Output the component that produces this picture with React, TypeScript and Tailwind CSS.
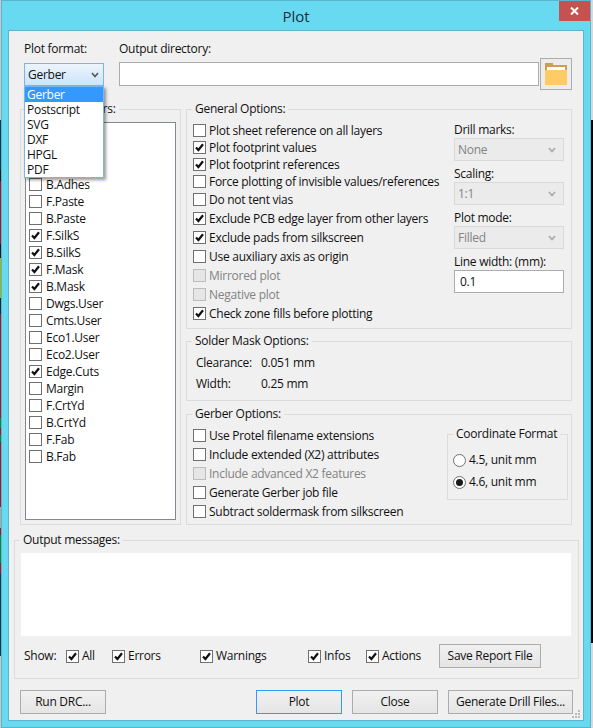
import type { ReactNode } from 'react'

function Check({ on, disabled }: { on?: boolean; disabled?: boolean }) {
  return (
    <span
      className={
        'flex h-[13px] w-[13px] shrink-0 items-center justify-center border ' +
        (disabled ? 'border-[#bcbcbc] bg-[#e6e6e6]' : 'border-[#707070] bg-white')
      }
    >
      {on && (
        <svg width="9" height="9" viewBox="0 0 9 9">
          <path d="M1 4.5 L3.4 7 L8 1.2" fill="none" stroke="#111" strokeWidth="2.2" />
        </svg>
      )}
    </span>
  )
}

function Opt({ label, on, disabled, className = '' }: { label: string; on?: boolean; disabled?: boolean; className?: string }) {
  return (
    <div className={'flex items-center gap-[3px] whitespace-nowrap ' + className}>
      <Check on={on} disabled={disabled} />
      <span className={disabled ? 'text-[#838383]' : ''}>{label}</span>
    </div>
  )
}

// Padding goes on the inner div: fieldset padding would push the legend along with it.
function Group({ title, className = '', inner = '', children }: { title: string; className?: string; inner?: string; children: ReactNode }) {
  return (
    <fieldset className={'min-w-0 border border-[#dcdcdc] ' + className}>
      <legend className="ml-[5px] whitespace-nowrap px-[3px] leading-[16px]">{title}</legend>
      <div className={inner}>{children}</div>
    </fieldset>
  )
}

function Combo({ value }: { value: string }) {
  return (
    <div className="flex h-[23px] w-[110px] items-center justify-between border border-[#d9d9d9] bg-[#ebebeb] pl-[3px] pr-[7px] text-[#838383]">
      {value}
      <svg width="8" height="6" viewBox="0 0 8 6">
        <path d="M1 1 L4 4.5 L7 1" fill="none" stroke="#a8a8a8" strokeWidth="1.6" />
      </svg>
    </div>
  )
}

function Btn({ label, className = '' }: { label: string; className?: string }) {
  return (
    <div className={'flex h-[24px] items-center justify-center border bg-gradient-to-b from-[#f0f0f0] to-[#e5e5e5] ' + className}>
      {label}
    </div>
  )
}

const general: [string, boolean, boolean, string][] = [
  ['Plot sheet reference on all layers', false, false, 'h-[17px]'],
  ['Plot footprint values', true, false, 'h-[17px]'],
  ['Plot footprint references', true, false, 'h-[17px]'],
  ['Force plotting of invisible values/references', false, false, 'h-[17px]'],
  ['Do not tent vias', false, false, 'h-[19px]'],
  ['Exclude PCB edge layer from other layers', true, false, 'h-[19px]'],
  ['Exclude pads from silkscreen', true, false, 'h-[19px]'],
  ['Use auxiliary axis as origin', false, false, 'h-[19px]'],
  ['Mirrored plot', false, true, 'h-[19px]'],
  ['Negative plot', false, true, 'h-[19px]'],
  ['Check zone fills before plotting', true, false, 'h-[19px]'],
]

const layers: [string, boolean][] = [
  ['B.Adhes', false],
  ['F.Paste', false],
  ['B.Paste', false],
  ['F.SilkS', true],
  ['B.SilkS', true],
  ['F.Mask', true],
  ['B.Mask', true],
  ['Dwgs.User', false],
  ['Cmts.User', false],
  ['Eco1.User', false],
  ['Eco2.User', false],
  ['Edge.Cuts', true],
  ['Margin', false],
  ['F.CrtYd', false],
  ['B.CrtYd', false],
  ['F.Fab', false],
  ['B.Fab', false],
]

export default function App() {
  return (
    <div className="flex h-[728px] w-[593px] overflow-hidden bg-[#c8c8c8] font-['Open_Sans',sans-serif] text-[12px] leading-[16px] tracking-[-0.27px] text-[#111]">
      {/* What shows of the desktop behind the dialog, left edge. */}
      <div className="w-[1px] shrink-0">
        <div className="h-[120px] bg-[#c8c8c8]" />
        <div className="h-[50px] bg-[#0c3c48]" />
        <div className="h-[11px] bg-[#1a1a1a]" />
        <div className="h-[63px] bg-[#a01628]" />
        <div className="h-[14px] bg-[#101c24]" />
        <div className="h-[40px] bg-[#a8b800]" />
        <div className="h-[16px] bg-[#0c2c38]" />
        <div className="h-[104px] bg-[#a01628]" />
        <div className="h-[10px] bg-[#0a8c3c]" />
        <div className="h-[7px] bg-[#a01628]" />
        <div className="h-[7px] bg-[#0a8c3c]" />
        <div className="h-[65px] bg-[#a01628]" />
        <div className="h-[21px] bg-[#a8a8a8]" />
        <div className="h-[7px] bg-[#a01628]" />
        <div className="h-[28px] bg-[#0a8c3c]" />
        <div className="h-[11px] bg-[#a01628]" />
        <div className="h-[82px] bg-[#0c3c48]" />
      </div>

      <div className="flex h-[728px] w-[590px] shrink-0 flex-col border border-[#5bb5cc] bg-[#67daf2] px-[6px] pb-[6px]">
        <div className="relative flex h-[29px] shrink-0 items-center justify-center text-[15px] tracking-normal text-[#1c2c40]">
          Plot
          <div className="absolute right-[-6px] top-0 flex h-[20px] w-[31px] items-center justify-center bg-[#c75050]">
            <svg width="9" height="8" viewBox="0 0 9 8">
              <path d="M1 0.5 L8 7.5 M8 0.5 L1 7.5" stroke="#fff" strokeWidth="2" />
            </svg>
          </div>
        </div>

        <div className="relative flex flex-1 flex-col border border-[#5bb5cc] bg-[#f0f0f0] pl-[5px] pr-[4px] pt-[10px]">
          <div className="ml-[10px] mr-[7px] flex gap-[15px]">
            <div className="w-[80px]">
              <div className="h-[16px]">Plot format:</div>
              <div className="relative mt-[6px] flex h-[23px] items-center justify-between border border-[#7eb4ea] bg-gradient-to-b from-[#ecf4fc] to-[#cde4fb] pl-[3px] pr-[4px]">
                Gerber
                <svg width="8" height="6" viewBox="0 0 8 6">
                  <path d="M1 1 L4 4.5 L7 1" fill="none" stroke="#555" strokeWidth="1.6" />
                </svg>
                {/* open dropdown lies over the layers group */}
                <div className="absolute left-[-1px] top-[22px] z-10 w-[80px] border border-[#7eb4ea] bg-white leading-[15px] shadow-[2px_2px_3px_rgba(0,0,0,0.4)]">
                  <div className="bg-[#3399ff] pl-[2px] text-white">Gerber</div>
                  <div className="pl-[2px]">Postscript</div>
                  <div className="pl-[2px]">SVG</div>
                  <div className="pl-[2px]">DXF</div>
                  <div className="pl-[2px]">HPGL</div>
                  <div className="pl-[2px]">PDF</div>
                </div>
              </div>
            </div>
            <div className="flex-1">
              <div className="h-[16px]">Output directory:</div>
              <div className="mt-[1px] flex items-center gap-[1px]">
                <div className="h-[24px] flex-1 border border-[#acacac] bg-white" />
                <div className="flex h-[32px] w-[32px] items-center justify-center border border-[#acacac] bg-[#ececec]">
                  <svg width="22" height="22" viewBox="0 0 22 22">
                    <path d="M0 0 H8 V2 H22 V8 H0 Z" fill="#cc9f50" />
                    <path d="M2 4 H20 V8 H2 Z" fill="#fff" />
                    <path d="M0 7 H22 V22 H0 Z" fill="#ffcb66" />
                  </svg>
                </div>
              </div>
            </div>
          </div>

          <div className="ml-[6px] mr-[7px] mt-[11px] flex gap-[5px]">
            <Group title="Included Layers:" className="h-[424px] w-[161px]" inner="px-[4px]">
              <div className="mt-[5px] h-[398px] border border-[#828790] bg-white pl-[3px] pt-[53px]">
                {layers.map(([name, on]) => (
                  <div key={name} className="flex h-[17px] items-center gap-[4px]">
                    <Check on={on} />
                    {name}
                  </div>
                ))}
              </div>
            </Group>

            <div className="w-[386px]">
              <Group title="General Options:" className="h-[228px]" inner="mt-[5px] flex pl-[6px]">
                <div className="w-[261px]">
                  {general.map(([label, on, dis, h]) => (
                    <Opt key={label} label={label} on={on} disabled={dis} className={h} />
                  ))}
                </div>
                <div className="flex flex-col">
                  <span>Drill marks:</span>
                  <Combo value="None" />
                  <span className="mt-[5px]">Scaling:</span>
                  <Combo value="1:1" />
                  <span className="mt-[5px]">Plot mode:</span>
                  <Combo value="Filled" />
                  <span className="mt-[5px]">Line width: (mm):</span>
                  <div className="flex h-[23px] w-[110px] items-center border border-[#acacac] bg-white pl-[5px]">0.1</div>
                </div>
              </Group>

              <Group title="Solder Mask Options:" className="mt-[4px] h-[68px]" inner="mt-[3px] pl-[9px]">
                <div className="flex h-[21px] items-center"><span className="w-[65px]">Clearance:</span>0.051 mm</div>
                <div className="flex h-[21px] items-center"><span className="w-[65px]">Width:</span>0.25 mm</div>
              </Group>

              <Group title="Gerber Options:" className="mt-[5px] h-[119px]" inner="mt-[4px] flex pl-[6px]">
                <div className="w-[254px]">
                  <Opt label="Use Protel filename extensions" className="h-[19px]" />
                  <Opt label="Include extended (X2) attributes" className="h-[19px]" />
                  <Opt label="Include advanced X2 features" disabled className="h-[19px]" />
                  <Opt label="Generate Gerber job file" className="h-[19px]" />
                  <Opt label="Subtract soldermask from silkscreen" className="h-[19px]" />
                </div>
                <Group title="Coordinate Format" className="h-[74px] w-[121px]" inner="mt-[7px] pl-[5px]">
                  <div className="flex h-[22px] items-center gap-[3px]">
                    <span className="h-[13px] w-[13px] rounded-full border border-[#707070] bg-white" />
                    4.5, unit mm
                  </div>
                  <div className="flex h-[22px] items-center gap-[3px]">
                    <span className="flex h-[13px] w-[13px] items-center justify-center rounded-full border border-[#707070] bg-white">
                      <span className="h-[7px] w-[7px] rounded-full bg-[#1a1a1a]" />
                    </span>
                    4.6, unit mm
                  </div>
                </Group>
              </Group>
            </div>
          </div>

          <Group title="Output messages:" className="mt-[7px] h-[147px]" inner="pl-[6px] pr-[7px]">
            <div className="mt-[5px] h-[83px] bg-white" />
            <div className="mt-[8px] flex h-[24px] items-center pl-[3px]">
              <span className="w-[42px]">Show:</span>
              <Opt label="All" on className="w-[46px]" />
              <Opt label="Errors" on className="w-[88px]" />
              <Opt label="Warnings" on className="w-[108px]" />
              <Opt label="Infos" on className="w-[58px]" />
              <Opt label="Actions" on className="w-[73px]" />
              <Btn label="Save Report File" className="w-[102px] border-[#acacac]" />
            </div>
          </Group>

          <div className="ml-[6px] mt-[11px] flex">
            <Btn label="Run DRC..." className="w-[86px] border-[#acacac]" />
            <Btn label="Plot" className="ml-[150px] w-[86px] border-[#3399ff]" />
            <Btn label="Close" className="ml-[10px] w-[86px] border-[#acacac]" />
            <Btn label="Generate Drill Files..." className="ml-[10px] w-[125px] border-[#acacac]" />
          </div>

          {/* Resize grip in the corner. */}
          <svg className="absolute bottom-[2px] right-[3px]" width="8" height="8" viewBox="0 0 8 8" fill="#bcbcbc">
            <rect x="6" y="0" width="2" height="2" />
            <rect x="3" y="3" width="2" height="2" />
            <rect x="6" y="3" width="2" height="2" />
            <rect x="0" y="6" width="2" height="2" />
            <rect x="3" y="6" width="2" height="2" />
            <rect x="6" y="6" width="2" height="2" />
          </svg>
        </div>
      </div>

      {/* Desktop behind the dialog, right edge. */}
      <div className="w-[2px] shrink-0">
        <div className="h-[120px] bg-[#d8d8d8]" />
        <div className="h-[523px] bg-black" />
        <div className="h-[85px] bg-[#d8d8d8]" />
      </div>
    </div>
  )
}
